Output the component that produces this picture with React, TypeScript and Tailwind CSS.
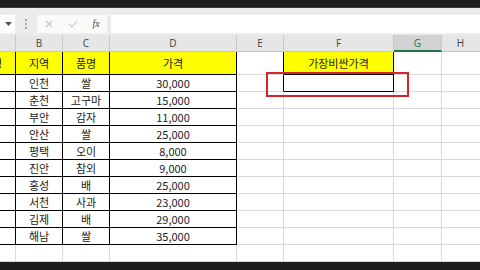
import { FC } from 'react';

const KR = "font-['Noto_Sans_CJK_KR','Noto_Sans',sans-serif]";

const data: [string, string, string][] = [
  ['인천', '쌀', '30,000'],
  ['춘천', '고구마', '15,000'],
  ['부안', '감자', '11,000'],
  ['안산', '쌀', '25,000'],
  ['평택', '오이', '8,000'],
  ['진안', '참외', '9,000'],
  ['홍성', '배', '25,000'],
  ['서천', '사과', '23,000'],
  ['김제', '배', '29,000'],
  ['해남', '쌀', '35,000'],
];

// column widths (A..G), H takes the rest
const cellBase = 'flex items-center justify-center shrink-0 border-r border-b overflow-hidden';

const Toolbar: FC = () => (
  <div className="flex items-start h-[28px] pt-[7px] bg-[#ececec] border-t border-[#3a3a3a]">
    {/* name box */}
    <div className="flex items-center justify-end w-[15px] h-[18px] bg-white pr-[3px]">
      <svg width="7" height="4" viewBox="0 0 7 4">
        <path d="M0 0h7L3.5 4z" fill="#555" />
      </svg>
    </div>
    {/* grip dots */}
    <div className="flex flex-col items-center justify-center gap-[2px] w-[22px] h-[18px]">
      <div className="w-[2px] h-[2px] bg-[#a8a8a8]" />
      <div className="w-[2px] h-[2px] bg-[#a8a8a8]" />
      <div className="w-[2px] h-[2px] bg-[#a8a8a8]" />
    </div>
    {/* cancel / enter / fx */}
    <div className="flex items-center w-[70px] h-[18px] bg-[#fafafa] ml-[0px]">
      <div className="flex items-center justify-center w-[24px]">
        <svg width="8" height="8" viewBox="0 0 8 8">
          <path d="M1 1l6 6M7 1l-6 6" stroke="#c4c4c4" strokeWidth="1.1" />
        </svg>
      </div>
      <div className="flex items-center justify-center w-[24px]">
        <svg width="10" height="8" viewBox="0 0 10 8">
          <path d="M1 4l3 3 5-6" stroke="#c4c4c4" strokeWidth="1.1" fill="none" />
        </svg>
      </div>
      <div className="flex items-center justify-center w-[22px] text-[10px] italic text-[#444] font-['Liberation_Serif',serif] leading-none">
        fx
      </div>
    </div>
    {/* formula input */}
    <div className="flex-1 h-[18px] bg-white ml-[4px]" />
  </div>
);

const ColumnHeaders: FC = () => {
  const cols = [
    { w: 'w-[16px]', label: '' },
    { w: 'w-[47px]', label: 'B' },
    { w: 'w-[47px]', label: 'C' },
    { w: 'w-[127px]', label: 'D' },
    { w: 'w-[47px]', label: 'E' },
    { w: 'w-[110px]', label: 'F' },
  ];
  return (
    <div className="flex h-[17px] bg-[#e6e6e6] text-[10px] text-[#444] font-['Open_Sans',sans-serif] leading-none">
      {cols.map((c) => (
        <div key={c.label} className={`flex items-center justify-center shrink-0 h-full border-r border-b border-r-[#c8c8c8] border-b-[#c6c6c6] ${c.w}`}>
          {c.label}
        </div>
      ))}
      <div className="flex items-center justify-center shrink-0 w-[48px] h-full bg-[#d2d2d2] border-r border-r-[#c8c8c8] border-b-2 border-b-[#217346] text-[#217346]">
        G
      </div>
      <div className="flex items-center justify-center flex-1 h-full border-b border-b-[#c6c6c6] pr-[1px]">H</div>
    </div>
  );
};

export default function App() {
  return (
    <div className={`relative flex flex-col w-[480px] h-[270px] overflow-hidden bg-white ${KR}`}>
      <div className="h-[7px] bg-[#1e1e1e]" />
      <Toolbar />
      <ColumnHeaders />

      {/* row 1: headers */}
      <div className="flex h-[23px] text-[11px] text-[#222]">
        <div className={`${cellBase} w-[16px] justify-start bg-[#ffff00] border-black`}>
          <span className="-ml-[8px]">명</span>
        </div>
        <div className={`${cellBase} w-[47px] bg-[#ffff00] border-black`}>지역</div>
        <div className={`${cellBase} w-[47px] bg-[#ffff00] border-black`}>품명</div>
        <div className={`${cellBase} w-[127px] bg-[#ffff00] border-black`}>가격</div>
        <div className={`${cellBase} w-[47px] border-r-black border-b-[#dadada]`} />
        <div className={`${cellBase} w-[110px] bg-[#ffff00] border-black`}>가장비싼가격</div>
        <div className={`${cellBase} w-[48px] border-[#dadada]`} />
        <div className="flex-1 border-b border-[#dadada]" />
      </div>

      {/* data rows */}
      {data.map(([region, item, price], i) => (
        <div key={region + i} className="flex h-[17px] text-[11px] text-[#222]">
          <div className={`${cellBase} w-[16px] border-black`} />
          <div className={`${cellBase} w-[47px] border-black`}>{region}</div>
          <div className={`${cellBase} w-[47px] border-black`}>{item}</div>
          <div className={`${cellBase} w-[127px] border-black`}>{price}</div>
          <div className={`${cellBase} w-[47px] border-b-[#dadada] ${i === 0 ? 'border-r-black' : 'border-r-[#dadada]'}`} />
          <div className={`${cellBase} w-[110px] ${i === 0 ? 'border-black' : 'border-[#dadada]'}`} />
          <div className={`${cellBase} w-[48px] border-[#dadada]`} />
          <div className="flex-1 border-b border-[#dadada]" />
        </div>
      ))}

      {/* empty row below the table */}
      <div className="flex h-[17px]">
        <div className={`${cellBase} w-[16px] border-[#dadada]`} />
        <div className={`${cellBase} w-[47px] border-[#dadada]`} />
        <div className={`${cellBase} w-[47px] border-[#dadada]`} />
        <div className={`${cellBase} w-[127px] border-[#dadada]`} />
        <div className={`${cellBase} w-[47px] border-[#dadada]`} />
        <div className={`${cellBase} w-[110px] border-[#dadada]`} />
        <div className={`${cellBase} w-[48px] border-[#dadada]`} />
        <div className="flex-1 border-b border-[#dadada]" />
      </div>

      <div className="flex-1 bg-[#1e1e1e]" />

      {/* red annotation box around F2 */}
      <div className="absolute left-[266px] top-[72px] w-[143px] h-[25px] border-2 border-[#d7262b]" />
    </div>
  );
}
